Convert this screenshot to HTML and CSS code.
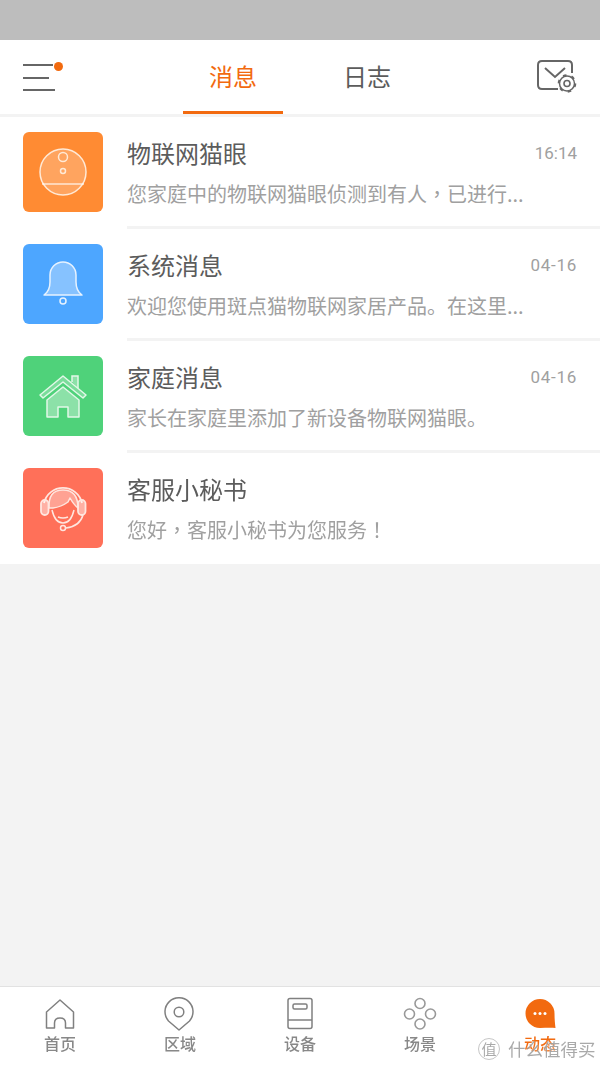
FILE: index.html
```html
<!DOCTYPE html>
<html lang="zh-CN">
<head>
    <meta charset="UTF-8">
    <meta name="viewport" content="width=device-width, initial-scale=1.0">
    <title>消息</title>
    <link rel="stylesheet" href="styles.css">
</head>
<body>

<div class="app">
    <div class="status-bar"></div>

    <div class="header">
        <svg class="menu-icon" width="40" height="32" viewBox="0 0 40 32">
            <path d="M0 5H30M0 18H26M0 30H32" fill="none" stroke="#666" stroke-width="2"/>
            <circle cx="35.500" cy="6.500" r="4.500" fill="#f26a0f"/>
        </svg>
        <div class="tabs">
            <div class="tab tab-active">消息</div>
            <div class="tab">日志</div>
        </div>
        <svg class="mail-icon" width="40" height="34" viewBox="0 0 40 34">
            <path d="M21 29H5Q1 29 1 25V5Q1 1 5 1H31Q35 1 35 5V13" fill="none" stroke="#666" stroke-width="2"/>
            <path d="M8 8L18 17L28 8" fill="none" stroke="#666" stroke-width="2"/>
            <circle cx="30" cy="23.500" r="7.500" fill="#fff" stroke="#666" stroke-width="1.500"/>
            <circle cx="30" cy="23.500" r="8.300" fill="none" stroke="#666" stroke-width="2" stroke-dasharray="3.500 5.200"/>
            <circle cx="30" cy="23.500" r="3" fill="none" stroke="#666" stroke-width="1.600"/>
        </svg>
    </div>

    <div class="list">
        <div class="row">
            <div class="tile tile-orange">
                <svg width="80" height="80" viewBox="0 0 80 80">
                    <circle cx="40" cy="40" r="23" fill="#fff" fill-opacity=".22" stroke="#ffe9d6" stroke-width="1.500"/>
                    <path d="M19 52H61" stroke="#fff" stroke-opacity=".55" stroke-width="2"/>
                    <circle cx="40" cy="25" r="4.500" fill="none" stroke="#ffe9d6" stroke-width="1.500"/>
                    <circle cx="40" cy="39" r="2.500" fill="none" stroke="#ffe9d6" stroke-width="1.500"/>
                </svg>
            </div>
            <div class="row-body">
                <div class="row-top">
                    <div class="row-title">物联网猫眼</div>
                    <div class="row-time">16:14</div>
                </div>
                <div class="row-text">您家庭中的物联网猫眼侦测到有人<span class="punct" lang="zh-TW">，</span>已进行...</div>
            </div>
        </div>

        <div class="row">
            <div class="tile tile-blue">
                <svg width="80" height="80" viewBox="0 0 80 80">
                    <path d="M21 51Q27 47 27 38V31A13 13 0 0 1 53 31V38Q53 47 59 51Z" fill="#fff" fill-opacity=".32" stroke="#e6f2ff" stroke-width="1.500" stroke-linejoin="round"/>
                    <circle cx="40" cy="57" r="3" fill="none" stroke="#e6f2ff" stroke-width="1.500"/>
                </svg>
            </div>
            <div class="row-body">
                <div class="row-top">
                    <div class="row-title">系统消息</div>
                    <div class="row-time row-date">04-16</div>
                </div>
                <div class="row-text">欢迎您使用斑点猫物联网家居产品。在这里...</div>
            </div>
        </div>

        <div class="row">
            <div class="tile tile-green">
                <svg width="80" height="80" viewBox="0 0 80 80">
                    <path d="M49 26V20H55V32" fill="#fff" fill-opacity=".35" stroke="#e2f8e8" stroke-width="1.500"/>
                    <path d="M17 39L40 20L63 39L60 42L40 26L20 42Z" fill="#fff" fill-opacity=".25" stroke="#e2f8e8" stroke-width="1.500" stroke-linejoin="round"/>
                    <path d="M24 44L40 31L56 44V61H45V51H35V61H24Z" fill="#fff" fill-opacity=".35" stroke="#e2f8e8" stroke-width="1.500" stroke-linejoin="round"/>
                </svg>
            </div>
            <div class="row-body">
                <div class="row-top">
                    <div class="row-title">家庭消息</div>
                    <div class="row-time row-date">04-16</div>
                </div>
                <div class="row-text">家长在家庭里添加了新设备物联网猫眼。</div>
            </div>
        </div>

        <div class="row row-last">
            <div class="tile tile-red">
                <svg width="80" height="80" viewBox="0 0 80 80">
                    <path d="M21 35A19.500 19.500 0 0 1 59 35" fill="none" stroke="#ffe6df" stroke-width="1.800"/>
                    <path d="M26 40Q25 22 40 22Q55 22 55 40Q51 37 47 30L45 34Q38 39 30 40Z" fill="#fff" fill-opacity=".35" stroke="#ffe6df" stroke-width="1.500" stroke-linejoin="round"/>
                    <rect x="18" y="32" width="7.500" height="15" rx="3.700" fill="#fff" fill-opacity=".45" stroke="#ffe6df" stroke-width="1.800"/>
                    <rect x="55" y="32" width="7.500" height="15" rx="3.700" fill="#fff" fill-opacity=".45" stroke="#ffe6df" stroke-width="1.800"/>
                    <path d="M29 42Q32 55 40 55Q48 55 51 42M35 49Q40 51 45 49M60 47Q57 58 43 60" fill="none" stroke="#ffe6df" stroke-width="1.500"/>
                    <circle cx="40" cy="60" r="2.500" fill="#ff7059" stroke="#ffe6df" stroke-width="1.500"/>
                </svg>
            </div>
            <div class="row-body">
                <div class="row-top">
                    <div class="row-title">客服小秘书</div>
                </div>
                <div class="row-text">您好<span class="punct" lang="zh-TW">，</span>客服小秘书为您服务<span class="punct" lang="zh-TW">！</span></div>
            </div>
        </div>
    </div>

    <div class="spacer"></div>

    <div class="nav">
        <div class="nav-item">
            <svg width="34" height="34" viewBox="0 0 34 34">
                <path d="M3.500 31V15L17 3L30.500 15V31H22.500V26Q22.500 21 17 21Q11.500 21 11.500 26V31Z" fill="none" stroke="#808080" stroke-width="1.500" stroke-linejoin="round"/>
            </svg>
            <span>首页</span>
        </div>
        <div class="nav-item">
            <svg width="34" height="34" viewBox="0 0 34 34">
                <path d="M16 33L5.500 24A14 14 0 1 1 26.500 24Z" fill="none" stroke="#808080" stroke-width="1.500" stroke-linejoin="round"/>
                <circle cx="16" cy="15" r="4.800" fill="none" stroke="#808080" stroke-width="1.500"/>
            </svg>
            <span>区域</span>
        </div>
        <div class="nav-item">
            <svg width="34" height="34" viewBox="0 0 34 34">
                <rect x="5" y="1.500" width="24" height="30" rx="2" fill="none" stroke="#808080" stroke-width="1.500"/>
                <rect x="10" y="7" width="14" height="5" rx="1.500" fill="none" stroke="#808080" stroke-width="1.500"/>
                <path d="M5 23H29" stroke="#808080" stroke-width="1.500"/>
            </svg>
            <span>设备</span>
        </div>
        <div class="nav-item">
            <svg width="34" height="34" viewBox="0 0 34 34">
                <g fill="none" stroke="#999" stroke-width="1.600">
                    <circle cx="17" cy="6.500" r="5"/>
                    <circle cx="17" cy="27" r="5"/>
                    <circle cx="6.500" cy="17" r="5"/>
                    <circle cx="27.500" cy="17" r="5"/>
                </g>
            </svg>
            <span>场景</span>
        </div>
        <div class="nav-item nav-active">
            <svg width="34" height="34" viewBox="0 0 34 34">
                <path d="M17 2A14.500 14.500 0 0 1 31.500 16.500C31.500 22 32 27 32.500 31C27 30.500 22 31 17 31A14.500 14.500 0 0 1 17 2Z" fill="#f26a0f"/>
                <circle cx="12" cy="16.500" r="1.500" fill="#fff"/>
                <circle cx="17" cy="16.500" r="1.500" fill="#fff"/>
                <circle cx="22" cy="16.500" r="1.500" fill="#fff"/>
            </svg>
            <span>动态</span>
        </div>
    </div>

    <div class="watermark">
        <span class="watermark-logo">值</span>
        <span>什么值得买</span>
    </div>
</div>

</body>
</html>
```
FILE: styles.css
```css
html, body {
    margin: 0;
    padding: 0;
}

body {
    font-family: "Noto Sans CJK SC", "Noto Sans", sans-serif;
    background: #f3f3f3;
}

.app {
    position: relative;
    display: flex;
    flex-direction: column;
    width: 600px;
    height: 1066px;
    overflow: hidden;
    filter: blur(.4px);
}

.status-bar {
    height: 40px;
    background: #bdbdbd;
}

.header {
    display: flex;
    align-items: center;
    height: 74px;
    padding: 0 23px;
    background: #fff;
    border-bottom: 3px solid #f3f3f3;
}

.menu-icon {
    flex-shrink: 0;
    margin-top: -2px;
}

.tabs {
    display: flex;
    gap: 34px;
    margin-left: 120px;
    align-self: stretch;
}

.tab {
    width: 100px;
    line-height: 71px;
    text-align: center;
    font-size: 24px;
    color: #5c5c5c;
}

.tab-active {
    height: 71px;
    line-height: 71px;
    color: #f26a0f;
    border-bottom: 3px solid #f26a0f;
}

.mail-icon {
    margin-left: auto;
}

.list {
    background: #fff;
}

.row {
    display: flex;
    height: 112px;
    box-sizing: border-box;
    padding: 15px 23px 0;
}

.row-last {
    height: 111px;
}

.tile {
    width: 80px;
    height: 80px;
    border-radius: 6px;
    flex-shrink: 0;
}

.tile svg {
    display: block;
}

.tile-orange { background: #ff8b33; }
.tile-blue { background: #4da6ff; }
.tile-green { background: #4fd27a; }
.tile-red { background: #ff7059; }

.row-body {
    flex: 1;
    margin-left: 24px;
    margin-right: -23px;
    padding-right: 23px;
    border-bottom: 3px solid #f3f3f3;
}

.row-last .row-body {
    border-bottom: 0;
}

.row-top {
    display: flex;
    justify-content: space-between;
    align-items: center;
    height: 42px;
}

.row-title {
    margin-top: -2px;
    font-size: 24px;
    color: #5c5c5c;
}

.row-time {
    font-family: Roboto, sans-serif;
    font-size: 17px;
    color: #a0a0a0;
}

.row-date {
    letter-spacing: .7px;
}

.row-text {
    margin-top: 4px;
    line-height: 32px;
    font-size: 20px;
    color: #a0a0a0;
    white-space: nowrap;
}

/* these marks sit in the middle of their cell in the screenshot */
.punct {
    font-family: "Noto Sans CJK TC", sans-serif;
}

.spacer {
    flex: 1;
}

.nav {
    display: flex;
    height: 79px;
    background: #fff;
    border-top: 1px solid #e2e2e2;
}

.nav-item {
    flex: 1;
    display: flex;
    flex-direction: column;
    align-items: center;
    padding-top: 10px;
    font-size: 16px;
    font-weight: 500;
    line-height: 22px;
    color: #888;
}

.nav-item svg {
    display: block;
    margin-bottom: 1px;
}

.nav-active {
    color: #f26a0f;
}

/* site watermark lies over the tab bar */
.watermark {
    position: absolute;
    left: 478px;
    top: 1035px;
    display: flex;
    align-items: center;
    gap: 8px;
    font-size: 17.500px;
    line-height: 28px;
    color: rgba(140, 140, 140, .75);
    text-shadow: 0 0 2px #fff;
}

.watermark-logo {
    width: 20px;
    height: 20px;
    line-height: 20px;
    text-align: center;
    font-size: 15px;
    border: 1px solid rgba(160, 160, 160, .6);
    border-radius: 50%;
}
```
